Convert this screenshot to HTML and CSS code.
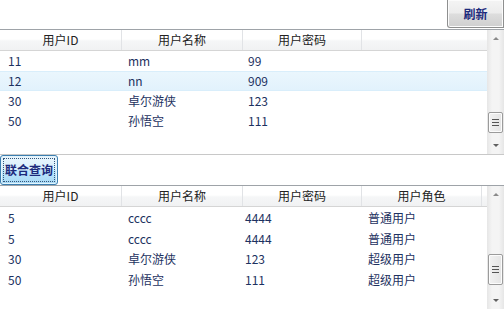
FILE: index.html
```html
<!DOCTYPE html>
<html>
<head>
<meta charset="utf-8">
<link rel="stylesheet" href="styles.css">
</head>
<body>
<div class="app">
  <div class="topbar">
    <button class="btn refresh">刷新</button>
  </div>
  <div class="grid g1">
    <div class="table">
      <div class="head">
        <div class="hc c1">用户ID</div>
        <div class="hc c2">用户名称</div>
        <div class="hc c3">用户密码</div>
        <div class="hc rest"></div>
      </div>
      <div class="row"><span class="c1">11</span><span class="c2">mm</span><span class="c3">99</span></div>
      <div class="row sel"><span class="c1">12</span><span class="c2">nn</span><span class="c3">909</span></div>
      <div class="row"><span class="c1">30</span><span class="c2">卓尔游侠</span><span class="c3">123</span></div>
      <div class="row"><span class="c1">50</span><span class="c2">孙悟空</span><span class="c3">111</span></div>
    </div>
    <div class="scroll s1">
      <div class="arrow up"></div>
      <div class="track">
        <div class="thumb"><i></i><i></i><i></i></div>
      </div>
      <div class="arrow down"></div>
    </div>
  </div>
  <div class="bar">
    <button class="btn query"><span>联合查询</span></button>
  </div>
  <div class="grid g2">
    <div class="table">
      <div class="head">
        <div class="hc c1">用户ID</div>
        <div class="hc c2">用户名称</div>
        <div class="hc c3">用户密码</div>
        <div class="hc c4">用户角色</div>
      </div>
      <div class="rows">
        <div class="row"><span class="c1 b">5</span><span class="c2 b2">cccc</span><span class="c3 b3">4444</span><span class="c4 b4">普通用户</span></div>
        <div class="row"><span class="c1 b">5</span><span class="c2 b2">cccc</span><span class="c3 b3">4444</span><span class="c4 b4">普通用户</span></div>
        <div class="row"><span class="c1 b">30</span><span class="c2 b2">卓尔游侠</span><span class="c3 b3">123</span><span class="c4 b4">超级用户</span></div>
        <div class="row"><span class="c1 b">50</span><span class="c2 b2">孙悟空</span><span class="c3 b3">111</span><span class="c4 b4">超级用户</span></div>
      </div>
    </div>
    <div class="scroll s2">
      <div class="arrow up"></div>
      <div class="track">
        <div class="thumb"><i></i><i></i><i></i></div>
      </div>
      <div class="arrow down"></div>
    </div>
  </div>
</div>
</body>
</html>
```

FILE: styles.css
```css
* { box-sizing: border-box; }
html, body { margin: 0; padding: 0; background: #fff; }
body {
  width: 504px; height: 309px; overflow: hidden;
  font-family: "Noto Sans CJK SC", "Noto Sans", sans-serif;
  font-size: 12px;
}
.app { display: flex; flex-direction: column; width: 504px; }
.topbar { height: 29px; display: flex; justify-content: flex-end; align-items: flex-start; }
.btn {
  font-family: "Noto Sans CJK SC", sans-serif;
  font-size: 12px; font-weight: bold; color: #1c2a7c;
  padding: 0; margin: 0; cursor: default;
}
.refresh {
  width: 57px; height: 28px;
  border: 1px solid #8e8f8f; border-top: none;
  border-radius: 0 0 0 3px;
  background: linear-gradient(#f4f4f4 0%, #ececec 48%, #dddddd 52%, #cfcfcf 100%);
  box-shadow: inset 0 0 0 1px #fbfbfb;
}
.grid { display: flex; border-top: 1px solid #9ea3a8; }
.g1 { height: 125px; }
.g2 { height: 124px; }
.table { flex: 1; display: flex; flex-direction: column; }
.head {
  height: 21px; display: flex;
  background: linear-gradient(#ffffff 0%, #ffffff 45%, #f5f6f7 55%, #f1f2f3 100%);
  border-bottom: 1px solid #d5d5d5;
}
.hc {
  color: #222; text-align: center; line-height: 20px;
  border-right: 1px solid #e1e3e6;
}
.hc.rest { border-right: none; flex: 1; }
.c1 { width: 122px; }
.c2 { width: 121px; }
.c3 { width: 119px; }
.c4 { width: 120px; }
.row {
  height: 20px; display: flex; align-items: center;
  color: #1c3160; line-height: 20px;
}
.rows { padding-top: 1px; }
.rows .row { height: 20.5px; }
.row span { padding-left: 8px; white-space: nowrap; }
.row .c2 { padding-left: 6px; }
.row .c3 { padding-left: 5px; }
.row .b { padding-left: 8px; }
.row .b2 { padding-left: 6px; }
.row .b3 { padding-left: 2px; }
.row .b4 { padding-left: 6px; }
.sel {
  background: linear-gradient(#eaf6fd, #e2f2fc);
  border-top: 1px solid #d9eefb; border-bottom: 1px solid #d9eefb;
}
.scroll {
  width: 17px; display: flex; flex-direction: column;
  background: linear-gradient(90deg, #e6e6e6, #f4f4f4 30%, #f4f4f4 70%, #e6e6e6);
}
.arrow { height: 17px; position: relative; }
.arrow::after {
  content: ""; position: absolute; left: 6px; width: 0; height: 0;
  border-left: 3px solid transparent; border-right: 3px solid transparent;
}
.arrow.up::after { top: 7px; border-bottom: 3px solid #8a8a8a; }
.arrow.down::after { top: 7px; border-top: 3px solid #606060; }
.track { flex: 1; display: flex; flex-direction: column; justify-content: flex-end; }
.thumb {
  margin: 0 1px; height: 22px;
  border: 1px solid #9b9b9b; border-radius: 2px;
  background: linear-gradient(90deg, #f2f2f2, #e4e4e4);
  box-shadow: inset 0 0 0 1px #fcfcfc;
  display: flex; flex-direction: column; justify-content: center; align-items: center; gap: 2px;
}
.thumb i { display: block; width: 7px; height: 1px; background: #555; }
.s1 .track { padding-bottom: 4px; }
.s1 .thumb { height: 21px; }
.s2 .track { padding-bottom: 7px; }
.s2 .thumb { height: 31px; }
.bar {
  height: 31px; border-top: 1px solid #c8c8c8;
  display: flex; align-items: flex-start;
}
.query {
  width: 58px; height: 30px;
  border: 1px solid #3c7fb1; border-radius: 3px;
  background: linear-gradient(#eaf6fd 0%, #d9f0fc 48%, #bee6fd 52%, #a7d9f5 100%);
  box-shadow: inset 0 0 0 1px #e4f4fc;
  display: flex; align-items: center; justify-content: center;
}
.query span {
  border: 1px dotted #33557a; padding: 4px 1px; line-height: 14px;
}
```
